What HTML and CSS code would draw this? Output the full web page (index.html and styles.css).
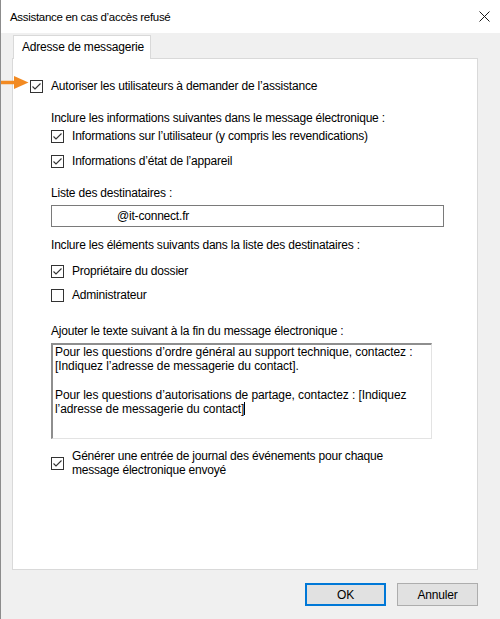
FILE: index.html
```html
<!DOCTYPE html>
<html lang="fr">
<head>
    <meta charset="UTF-8">
    <title>Assistance en cas d’accès refusé</title>
    <link rel="stylesheet" href="styles.css">
</head>
<body>
    <div class="window">
        <!-- Title bar -->
        <div class="titlebar">
            <span class="title">Assistance en cas d’accès refusé</span>
            <svg class="close" viewBox="0 0 11 11" width="11" height="11">
                <path d="M0.5 0.5 L10.5 10.5 M10.5 0.5 L0.5 10.5" stroke="#1a1a1a" stroke-width="1" fill="none"/>
            </svg>
        </div>

        <!-- Orange pointer arrow -->
        <svg class="pointer" viewBox="0 0 28 13" width="28" height="13">
            <rect x="0" y="4.75" width="15" height="3.5" fill="#f28a22"/>
            <polygon points="13,0 27.5,6.5 13,13" fill="#f28a22"/>
        </svg>

        <div class="content">
            <div class="tabs">
                <div class="tab">Adresse de messagerie</div>
            </div>

            <div class="panel">
                <label class="check-row">
                    <span class="box checked"></span>
                    <span>Autoriser les utilisateurs à demander de l’assistance</span>
                </label>

                <div class="group">
                    <p class="heading mt-14">Inclure les informations suivantes dans le message électronique :</p>
                    <label class="check-row">
                        <span class="box checked"></span>
                        <span>Informations sur l’utilisateur (y compris les revendications)</span>
                    </label>
                    <label class="check-row mt-5">
                        <span class="box checked"></span>
                        <span>Informations d’état de l’appareil</span>
                    </label>

                    <p class="heading mt-14">Liste des destinataires :</p>
                    <div class="textbox">@it-connect.fr</div>

                    <p class="heading mt-10">Inclure les éléments suivants dans la liste des destinataires :</p>
                    <label class="check-row mt-8">
                        <span class="box checked"></span>
                        <span>Propriétaire du dossier</span>
                    </label>
                    <label class="check-row mt-4">
                        <span class="box"></span>
                        <span>Administrateur</span>
                    </label>

                    <p class="heading mt-18">Ajouter le texte suivant à la fin du message électronique :</p>
                    <div class="textarea">
                        Pour les questions d’ordre général au support technique, contactez :<br>
                        [Indiquez l’adresse de messagerie du contact].<br>
                        <br>
                        Pour les questions d’autorisations de partage, contactez : [Indiquez<br>
                        l’adresse de messagerie du contact]<span class="caret"></span>
                    </div>

                    <label class="check-row multi">
                        <span class="box checked"></span>
                        <span>Générer une entrée de journal des événements pour chaque<br>message électronique envoyé</span>
                    </label>
                </div>
            </div>

            <div class="footer">
                <button class="btn btn-default">OK</button>
                <button class="btn">Annuler</button>
            </div>
        </div>
    </div>
</body>
</html>
```

FILE: styles.css
```css
* {
    margin: 0;
    padding: 0;
    box-sizing: border-box;
}

body {
    font-family: 'Liberation Sans', Arial, sans-serif;
    font-size: 12px;
    letter-spacing: -0.2px;
    color: #000000;
    background: #f0f0f0;
    width: 500px;
    height: 619px;
    overflow: hidden;
}

/* Window frame */
.window {
    position: relative;
    height: 619px;
    border-left: 1px solid #8c8c8c;
    background: #f0f0f0;
}

.titlebar {
    height: 33px;
    background: #ffffff;
    display: flex;
    align-items: center;
    justify-content: space-between;
    padding: 0 10px 0 9px;
}

.title {
    font-size: 11.5px;
    letter-spacing: -0.3px;
}

.close {
    display: block;
}

.pointer {
    position: absolute;
    left: 0;
    top: 76px;
}

.content {
    padding: 2px 0 0 11px;
}

/* Tabs */
.tabs {
    display: flex;
    padding-left: 1px;
    position: relative;
    z-index: 1;
}

.tab {
    height: 24px;
    display: flex;
    align-items: center;
    padding: 0 6px 1px 8px;
    background: #ffffff;
    border: 1px solid #d9d9d9;
    border-bottom: none;
}

.panel {
    width: 466px;
    height: 512px;
    margin-top: -1px;
    background: #ffffff;
    border: 1px solid #d9d9d9;
    padding: 17px 0 0 17px;
}

.group {
    margin-left: 21px;
}

.heading {
    height: 16px;
    line-height: 16px;
    white-space: nowrap;
}

/* Checkboxes */
.check-row {
    display: flex;
    align-items: center;
    gap: 8px;
    height: 20px;
    white-space: nowrap;
}

.check-row.multi {
    height: 27px;
    line-height: 13.5px;
    margin-top: 11px;
}

.box {
    width: 13px;
    height: 13px;
    flex: none;
    border: 1px solid #333333;
    background: #ffffff;
}

.box.checked {
    background: #ffffff url("data:image/svg+xml,%3Csvg xmlns='http://www.w3.org/2000/svg' viewBox='0 0 11 11'%3E%3Cpath d='M1.5 5.5 L4 8 L9.5 2.5' stroke='%23333' stroke-width='1.1' fill='none'/%3E%3C/svg%3E") no-repeat center / 11px 11px;
}

/* Inputs */
.textbox {
    width: 393px;
    height: 22px;
    margin-top: 4px;
    border: 1px solid #7a7a7a;
    padding-left: 65px;
    line-height: 20px;
}

.textarea {
    width: 381px;
    height: 96px;
    margin-top: 4px;
    border-top: 2px solid #8e8e8e;
    border-left: 2px solid #8e8e8e;
    border-right: 1px solid #e3e3e3;
    border-bottom: 1px solid #e3e3e3;
    padding: 0 2px;
    line-height: 14.3px;
    letter-spacing: -0.08px;
    white-space: nowrap;
}

.caret {
    display: inline-block;
    width: 1px;
    height: 13px;
    background: #000000;
    vertical-align: -2px;
}

/* Footer buttons */
.footer {
    width: 466px;
    display: flex;
    justify-content: flex-end;
    gap: 11px;
    padding-top: 13px;
}

.btn {
    width: 81px;
    height: 23px;
    font-family: inherit;
    font-size: 12px;
    letter-spacing: -0.2px;
    color: #000000;
    background: #e1e1e1;
    border: 1px solid #adadad;
}

.btn-default {
    border-color: #0078d7;
    box-shadow: inset 0 0 0 1px #0078d7;
}

.mt-4 { margin-top: 4px; }
.mt-5 { margin-top: 5px; }
.mt-8 { margin-top: 8px; }
.mt-10 { margin-top: 10px; }
.mt-14 { margin-top: 14px; }
.mt-18 { margin-top: 18px; }
```
